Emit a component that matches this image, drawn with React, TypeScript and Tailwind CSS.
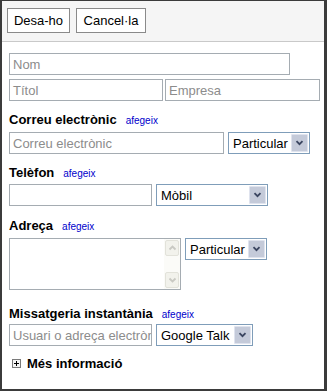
import React from "react";

function Chevron() {
  return (
    <svg width="9" height="6" viewBox="0 0 9 6">
      <path d="M1.5 1.2 L4.5 4.2 L7.5 1.2" fill="none" stroke="#3a4560" strokeWidth="1.8" />
    </svg>
  );
}

function Select({ label, w }: { label: string; w: string }) {
  return (
    <div className={`${w} h-[22px] border border-[#7f9db9] bg-white flex items-stretch shrink-0`}>
      <div className="flex-1 flex items-center pl-[4px] text-[13px] text-black leading-none overflow-hidden whitespace-nowrap">
        {label}
      </div>
      <div className="w-[17px] m-px border border-[#dfe3ee] bg-[#c4cad9] flex items-center justify-center rounded-[1px]">
        <Chevron />
      </div>
    </div>
  );
}

function Input({ ph, w }: { ph?: string; w: string }) {
  return (
    <div className={`${w} h-[22px] border border-[#a5acb2] bg-white flex items-center pl-[3px] text-[13px] text-[#8c8c8c] leading-none overflow-hidden whitespace-nowrap shrink-0`}>
      {ph}
    </div>
  );
}

function Label({ text, link = true }: { text: string; link?: boolean }) {
  return (
    <div className="flex items-baseline h-[15px] leading-[15px]">
      <span className="text-[13px] font-bold text-black">{text}</span>
      {link && <span className="ml-[9px] text-[10px] text-[#0000cc]">afegeix</span>}
    </div>
  );
}

function ScrollArrow({ up }: { up: boolean }) {
  return (
    <div className="h-[16px] mx-px border border-[#e2e2da] bg-[#f2f2ec] rounded-[2px] flex items-center justify-center">
      <svg width="9" height="6" viewBox="0 0 9 6">
        <path
          d={up ? "M1.5 4.5 L4.5 1.5 L7.5 4.5" : "M1.5 1.5 L4.5 4.5 L7.5 1.5"}
          fill="none"
          stroke="#c9c9c3"
          strokeWidth="1.8"
        />
      </svg>
    </div>
  );
}

export default function App() {
  return (
    <div
      className="w-[327px] h-[391px] bg-[#3b3b3b] pl-[2px] pt-px pr-[3px] pb-[2px]"
      style={{ fontFamily: '"Liberation Sans", Arial, sans-serif' }}
    >
      <div className="w-full h-full bg-white flex flex-col">
        <div className="h-[41px] bg-[#f5f5f5] border-b border-[#c9c9c9] flex items-start pt-[7px] pl-[5px] gap-[6px] shrink-0">
          <div className="w-[63px] h-[25px] border border-[#8a8a8a] bg-white flex items-center justify-center text-[13px] text-black">
            Desa-ho
          </div>
          <div className="w-[70px] h-[25px] border border-[#8a8a8a] bg-white flex items-center justify-center text-[13px] text-black">
            Cancel·la
          </div>
        </div>

        <div className="pl-[7px] flex flex-col">
          <div className="mt-[11px]">
            <Input ph="Nom" w="w-[281px]" />
          </div>
          <div className="mt-[4px] flex gap-[2px]">
            <Input ph="Títol" w="w-[154px]" />
            <Input ph="Empresa" w="w-[155px]" />
          </div>

          <div className="mt-[11px]">
            <Label text="Correu electrònic" />
          </div>
          <div className="mt-[5px] flex gap-[4px]">
            <Input ph="Correu electrònic" w="w-[215px]" />
            <Select label="Particular" w="w-[82px]" />
          </div>

          <div className="mt-[11px]">
            <Label text="Telèfon" />
          </div>
          <div className="mt-[4px] flex gap-[4px]">
            <Input w="w-[143px]" />
            <Select label="Mòbil" w="w-[112px]" />
          </div>

          <div className="mt-[12px]">
            <Label text="Adreça" />
          </div>
          <div className="mt-[5px] flex gap-[4px] items-start">
            <div className="w-[172px] h-[52px] border border-[#a5acb2] bg-white flex">
              <div className="flex-1" />
              <div className="w-[16px] bg-[#fbfbf8] flex flex-col justify-between py-px">
                <ScrollArrow up />
                <ScrollArrow up={false} />
              </div>
            </div>
            <Select label="Particular" w="w-[82px]" />
          </div>

          <div className="mt-[16px]">
            <Label text="Missatgeria instantània" />
          </div>
          <div className="mt-[3px] flex gap-[4px]">
            <Input ph="Usuari o adreça electrònica" w="w-[143px]" />
            <Select label="Google Talk" w="w-[97px]" />
          </div>

          <div className="mt-[10px] flex items-center h-[15px] pl-[3px]">
            <div className="w-[9px] h-[9px] border border-[#7a7a7a] bg-[#f4f4f4] relative shrink-0">
              <div className="absolute left-[1px] top-[3px] w-[5px] h-px bg-black" />
              <div className="absolute left-[3px] top-[1px] w-px h-[5px] bg-black" />
            </div>
            <span className="ml-[6px] text-[13px] font-bold text-black leading-[15px]">Més informació</span>
          </div>
        </div>
      </div>
    </div>
  );
}
